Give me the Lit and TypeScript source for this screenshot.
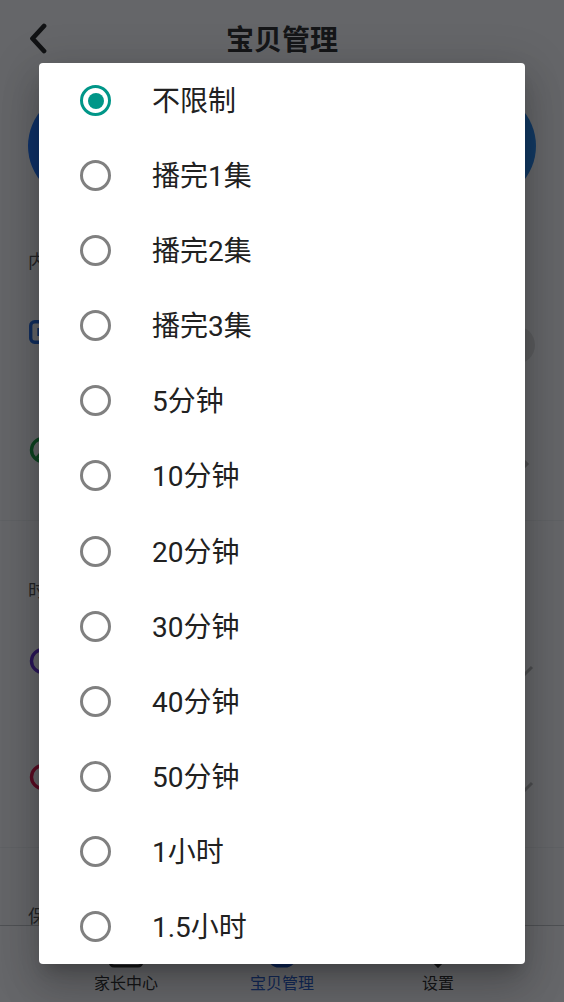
import { LitElement, html, css } from "lit";
import { customElement } from "lit/decorators.js";

const OPTIONS = ["不限制", "播完1集", "播完2集", "播完3集", "5分钟", "10分钟", "20分钟", "30分钟", "40分钟", "50分钟", "1小时", "1.5小时"];

@customElement("app-root")
export class AppRoot extends LitElement {
  static styles = css`
    :host { display: block; position: relative; width: 564px; height: 1002px; overflow: hidden; background: #fafbfd; color: #333; font-family: Roboto, "Noto Sans CJK SC", sans-serif; }
    .page { display: flex; flex-direction: column; height: 100%; }
    .header { flex: none; height: 76px; display: flex; align-items: center; justify-content: center; position: relative; }
    .back { position: absolute; left: 26px; top: 22px; width: 26px; height: 32px; }
    .title { font-size: 28px; font-weight: 700; color: #333; font-family: "Noto Sans CJK SC", sans-serif; }
    .main { flex: 1; min-height: 0; overflow: hidden; }
    .card { height: 110px; margin: 15px 28px 0; border-radius: 55px; background: linear-gradient(90deg, #2478fa, #2f8cf0); }
    .label { height: 24px; line-height: 24px; margin: 49px 0 0 28px; font-size: 18px; color: #555; }
    .label.t2 { margin-top: 58px; }
    .label.t3 { margin-top: 57px; }
    .row { display: flex; align-items: center; justify-content: space-between; padding: 0 30px 0 29px; }
    .r1 { height: 116px; }
    .r2 { height: 119px; padding-bottom: 11px; border-bottom: 1px solid #eef0f2; }
    .r3 { height: 116px; }
    .r4 { height: 116px; padding-bottom: 12px; border-bottom: 1px solid #eef0f2; }
    .ico { display: block; width: 28px; height: 28px; }
    .knob { width: 38px; height: 38px; border-radius: 50%; background: #e0e0e0; margin-right: -1px; margin-top: 26px; }
    .chev { display: block; width: 22px; height: 22px; }
    .chev.right { margin-top: 28px; margin-right: -1px; }
    .chev.down { margin-top: 18px; margin-right: -1px; }
    .nav { flex: none; height: 77px; box-sizing: border-box; border-top: 1px solid #c4c5c8; padding: 0 48px; display: grid; grid-template-columns: repeat(3, 1fr); background: #fdfdfe; position: relative; }
    .tab { display: flex; flex-direction: column; align-items: center; font-size: 16px; line-height: 20px; color: #333; padding-top: 10px; font-family: "Noto Sans CJK SC", sans-serif; }
    .tab.on { color: #2f63d0; }
    .tab svg { display: block; width: 36px; height: 32px; margin-bottom: 4px; }
    .scrim { position: absolute; inset: 0; background: rgba(2, 3, 7, 0.6); }
    .dialog { position: absolute; left: 39px; top: 63px; width: 486px; height: 901px; background: #fff; border-radius: 4px; overflow: hidden; display: grid; grid-template-rows: repeat(12, 1fr);
      box-shadow: 0 11px 15px -7px rgba(0,0,0,.2), 0 24px 38px 3px rgba(0,0,0,.14), 0 9px 46px 8px rgba(0,0,0,.12); }
    .opt { display: flex; align-items: center; padding-left: 41px; gap: 41px; font-size: 28px; color: #212121; }
    .opt-text { margin-bottom: 3px; }
    .radio { flex: none; box-sizing: border-box; width: 31px; height: 31px; border-radius: 50%; border: 3.5px solid #808080; display: flex; align-items: center; justify-content: center; }
    .radio.on { border-color: #009688; }
    .dot { width: 16px; height: 16px; border-radius: 50%; background: #009688; }
  `;

  render() {
    return html`
      <div class="page">
        <div class="header">
          <svg class="back" viewBox="0 0 26 32" fill="none" stroke="#2a2a2a" stroke-width="4.8" stroke-linecap="round" stroke-linejoin="round"><path d="M18 4 6.5 16.5 18 29"/></svg>
          <div class="title">宝贝管理</div>
        </div>
        <div class="main">
          <div class="card"></div>
          <div class="label">内容</div>
          <div class="row r1">
            <svg class="ico" viewBox="0 0 28 28" fill="none" stroke="#2a6fe0" stroke-width="3.4"><rect x="1.7" y="3.7" width="24" height="20.6" rx="4"/><path d="M10 10v8"/></svg>
            <div class="knob"></div>
          </div>
          <div class="row r2">
            <svg class="ico" viewBox="0 0 28 28" fill="none" stroke="#1fa54a" stroke-width="3.4"><circle cx="14" cy="14" r="11.5"/><path d="M8 22l10-12"/></svg>
            <svg class="chev right" viewBox="0 0 22 22" fill="none" stroke="#bbb" stroke-width="3"><path d="M6 3l8 8-8 8"/></svg>
          </div>
          <div class="label t2">时间</div>
          <div class="row r3">
            <svg class="ico" viewBox="0 0 28 28" fill="none" stroke="#6a35d8" stroke-width="3.4"><circle cx="14" cy="14" r="11.5"/></svg>
            <svg class="chev down" viewBox="0 0 22 22" fill="none" stroke="#bbb" stroke-width="3"><path d="M3 8l8 8 8-8"/></svg>
          </div>
          <div class="row r4">
            <svg class="ico" viewBox="0 0 28 28" fill="none" stroke="#e01a4f" stroke-width="3.4"><circle cx="14" cy="14" r="11.5"/></svg>
            <svg class="chev down" viewBox="0 0 22 22" fill="none" stroke="#bbb" stroke-width="3"><path d="M3 8l8 8 8-8"/></svg>
          </div>
          <div class="label t3">保护</div>
        </div>
        <div class="nav">
          <div class="tab">
            <svg viewBox="0 0 36 32" fill="none" stroke="#333" stroke-width="3"><rect x="2" y="6" width="32" height="24" rx="4"/></svg>
            家长中心
          </div>
          <div class="tab on">
            <svg viewBox="0 0 36 32" fill="none" stroke="#1f55c8" stroke-width="5"><path d="M6 6v14a9 9 0 0 0 9 9h6a9 9 0 0 0 9-9"/></svg>
            宝贝管理
          </div>
          <div class="tab">
            <svg viewBox="0 0 36 32" fill="none" stroke="#333" stroke-width="3"><path d="M18 2 32 16 18 30 4 16z"/></svg>
            设置
          </div>
        </div>
      </div>
      <div class="scrim"></div>
      <div class="dialog">
        ${OPTIONS.map((o, i) => html`
          <div class="opt">
            <span class="radio ${i === 0 ? "on" : ""}">${i === 0 ? html`<span class="dot"></span>` : ""}</span>
            <span class="opt-text">${o}</span>
          </div>`)}
      </div>
    `;
  }
}
